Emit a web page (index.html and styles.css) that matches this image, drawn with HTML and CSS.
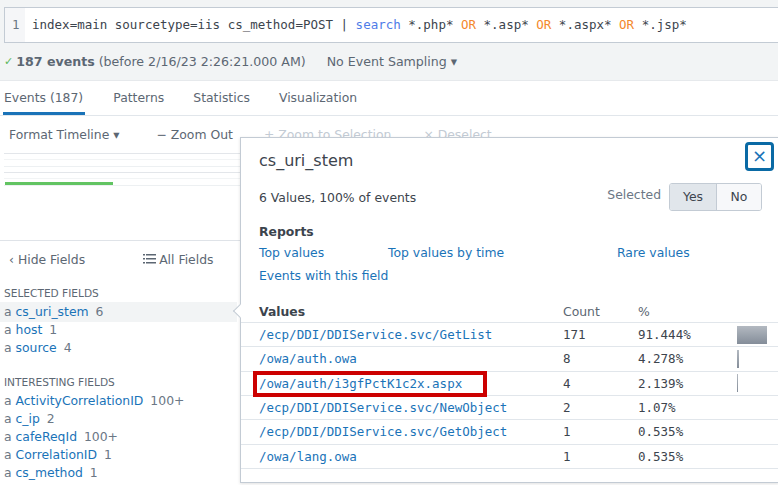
FILE: index.html
```html
<!DOCTYPE html>
<html>
<head>
<meta charset="utf-8">
<link rel="stylesheet" href="styles.css">
</head>
<body>
<div class="top">
  <div class="search">
    <div class="gutter">1</div>
    <div class="query">index=main sourcetype=iis cs_method=POST | <span class="kw">search</span> *.php* <span class="op">OR</span> *.asp* <span class="op">OR</span> *.aspx* <span class="op">OR</span> *.jsp*</div>
  </div>
  <div class="status">
    <span class="check">✓</span><b>187 events</b>&nbsp;(before 2/16/23 2:26:21.000 AM)
    <span class="sampling">No Event Sampling ▾</span>
  </div>
</div>
<div class="tabs">
  <div class="tab active">Events (187)</div>
  <div class="tab">Patterns</div>
  <div class="tab">Statistics</div>
  <div class="tab">Visualization</div>
</div>
<div class="timeline">
  <div class="toolbar">
    <span class="tb fmt">Format Timeline ▾</span>
    <span class="tb zo">− Zoom Out</span>
    <span class="tb dis zs">+ Zoom to Selection</span>
    <span class="tb dis ds">× Deselect</span>
  </div>
  <div class="grid">
    <div class="gl strong"></div>
    <div class="gl faint g2"></div>
    <div class="gl mid g3"></div>
    <div class="gl strong g2"></div>
    <div class="gl faint g2"></div>
    <div class="green"></div>
    <div class="gl mid"></div>
  </div>
</div>
<div class="sidebar">
  <div class="sidehead">
    <span class="hide">‹ Hide Fields</span>
    <span class="all"><svg width="13" height="10" viewBox="0 0 13 10"><g fill="#5c6773"><rect x="0" y="0" width="2" height="1.5"/><rect x="3" y="0" width="10" height="1.5"/><rect x="0" y="4" width="2" height="1.5"/><rect x="3" y="4" width="10" height="1.5"/><rect x="0" y="8" width="2" height="1.5"/><rect x="3" y="8" width="10" height="1.5"/></g></svg> All Fields</span>
  </div>
  <div class="sect">SELECTED FIELDS</div>
  <div class="field sel"><span class="t">a</span> <span class="n">cs_uri_stem</span> <span class="c">6</span></div>
  <div class="field"><span class="t">a</span> <span class="n">host</span> <span class="c">1</span></div>
  <div class="field"><span class="t">a</span> <span class="n">source</span> <span class="c">4</span></div>
  <div class="sect sect2">INTERESTING FIELDS</div>
  <div class="field"><span class="t">a</span> <span class="n">ActivityCorrelationID</span> <span class="c">100+</span></div>
  <div class="field"><span class="t">a</span> <span class="n">c_ip</span> <span class="c">2</span></div>
  <div class="field"><span class="t">a</span> <span class="n">cafeReqId</span> <span class="c">100+</span></div>
  <div class="field"><span class="t">a</span> <span class="n">CorrelationID</span> <span class="c">1</span></div>
  <div class="field"><span class="t">a</span> <span class="n">cs_method</span> <span class="c">1</span></div>
</div>

<div class="popup">
  <div class="close">×</div>
  <div class="ptitle">cs_uri_stem</div>
  <div class="prow">
    <span class="pcount">6 Values, 100% of events</span>
    <span class="selected">Selected</span>
    <div class="btngroup"><span class="btn on">Yes</span><span class="btn">No</span></div>
  </div>
  <div class="reports">Reports</div>
  <div class="links">
    <span class="lk l1">Top values</span>
    <span class="lk l2">Top values by time</span>
    <span class="lk">Rare values</span>
  </div>
  <div class="links"><span class="lk">Events with this field</span></div>
  <table class="vals">
    <thead>
      <tr><th class="cv">Values</th><th class="cc">Count</th><th class="cp">%</th><th class="cb"></th></tr>
    </thead>
    <tbody>
      <tr><td class="cv">/ecp/DDI/DDIService.svc/GetList</td><td class="cc">171</td><td class="cp">91.444%</td><td class="cb"><div class="bar" style="width:30px"></div></td></tr>
      <tr><td class="cv">/owa/auth.owa</td><td class="cc">8</td><td class="cp">4.278%</td><td class="cb"><div class="bar" style="width:2px"></div></td></tr>
      <tr><td class="cv"><span class="hl">/owa/auth/i3gfPctK1c2x.aspx</span></td><td class="cc">4</td><td class="cp">2.139%</td><td class="cb"><div class="bar" style="width:1px"></div></td></tr>
      <tr><td class="cv">/ecp/DDI/DDIService.svc/NewObject</td><td class="cc">2</td><td class="cp">1.07%</td><td class="cb"></td></tr>
      <tr><td class="cv">/ecp/DDI/DDIService.svc/GetObject</td><td class="cc">1</td><td class="cp">0.535%</td><td class="cb"></td></tr>
      <tr><td class="cv">/owa/lang.owa</td><td class="cc">1</td><td class="cp">0.535%</td><td class="cb"></td></tr>
    </tbody>
  </table>
</div>
</body>
</html>
```

FILE: styles.css
```css
html, body {
  margin: 0;
  padding: 0;
}
body {
  width: 778px;
  height: 485px;
  overflow: hidden;
  position: relative;
  background: #fff;
  font-family: "DejaVu Sans", sans-serif;
  font-size: 12.4px;
  color: #3c444d;
}
.top {
  background: #f2f4f5;
  border-bottom: 1px solid #e6e9ec;
  padding-top: 7px;
  box-sizing: border-box;
  height: 81px;
}
.search {
  margin-left: 4px;
  margin-right: -20px;
  height: 36px;
  box-sizing: border-box;
  border: 1px solid #c3cbd4;
  background: #fff;
  display: flex;
  align-items: stretch;
}
.gutter {
  width: 20px;
  background: #f5f6f8;
  color: #6b7785;
  font-family: "DejaVu Sans Mono", monospace;
  font-size: 12.5px;
  line-height: 34px;
  padding-left: 7px;
  box-sizing: border-box;
}
.query {
  padding-left: 7px;
  font-family: "DejaVu Sans Mono", monospace;
  font-size: 12.5px;
  line-height: 34px;
  white-space: pre;
  color: #3c444d;
}
.kw { color: #4f7ce8; }
.op { color: #f4882b; }
.status {
  height: 37px;
  display: flex;
  align-items: center;
  padding-left: 4px;
  color: #5c6773;
  font-size: 12.6px;
}
.check {
  color: #5cb85c;
  font-size: 11px;
  margin-right: 3px;
}
.status b { font-weight: bold; }
.sampling { margin-left: 21px; }
.tabs {
  height: 34px;
  border-bottom: 1px solid #e1e6eb;
  display: flex;
  gap: 27px;
  padding-left: 3px;
}
.tab {
  padding: 9px 1px 0;
  line-height: 16px;
  color: #5c6773;
  font-size: 12.4px;
  box-sizing: border-box;
  height: 34px;
}
.tab.active {
  border-bottom: 3px solid #1a73b8;
  padding-right: 2px;
}
.timeline {
  height: 124px;
  border-bottom: 1px solid #dfe3e8;
}
.toolbar {
  height: 37px;
  line-height: 38px;
  display: flex;
  color: #5c6773;
  position: relative;
}
.tb { white-space: nowrap; }
.fmt { margin-left: 9px; }
.zo { margin-left: 37px; }
.zs { margin-left: 31px; }
.ds { margin-left: 32px; }
.dis { color: #c3cbd4; }
.grid {
  margin-left: 4px;
}
.gl { height: 1px; }
.gl.strong { background: #e3e6ea; }
.gl.mid { background: #edf0f2; }
.gl.faint { background: #f2f4f5; }
.g2 { margin-top: 5px; }
.g3 { margin-top: 6px; }
.green {
  margin-top: 3px;
  width: 108px;
  margin-left: 1px;
  height: 3px;
  background: #62c462;
}
.sidebar {
  width: 237px;
}
.sidehead {
  height: 36px;
  display: flex;
  align-items: center;
  color: #5c6773;
}
.hide { margin-left: 9px; }
.all { margin-left: 58px; display: flex; align-items: center; gap: 3px; }
.sect {
  margin-top: 7px;
  line-height: 19px;
  padding-left: 4px;
  font-size: 10.6px;
  color: #5c6773;
}
.sect2 { margin-top: 15px; line-height: 20px; }
.field {
  line-height: 18px;
  padding-left: 4px;
  white-space: nowrap;
}
.field.sel {
  background: #f2f4f5;
  padding-top: 1px;
  padding-bottom: 1px;
  margin-top: -1px;
  margin-bottom: -1px;
}
.field .t { color: #6b7785; }
.field .n { color: #1a73b8; }
.field .c { color: #6b7785; margin-left: 3px; }
.popup {
  position: absolute;
  left: 240px;
  top: 137px;
  right: -1px;
  height: 346px;
  box-sizing: border-box;
  background: #fff;
  border: 1px solid #c3cbd4;
  box-shadow: 0 1px 3px rgba(0,0,0,0.12);
  padding-left: 18px;
}
.popup::before {
  content: "";
  position: absolute;
  left: -6px;
  top: 168px;
  width: 9px;
  height: 9px;
  background: #fff;
  border-left: 1px solid #c3cbd4;
  border-bottom: 1px solid #c3cbd4;
  transform: rotate(45deg);
}
.close {
  position: absolute;
  top: 4px;
  right: 4px;
  width: 29px;
  height: 29px;
  box-sizing: border-box;
  border: 3px solid #0a6aa5;
  border-radius: 4px;
  color: #1a73b8;
  font-size: 18px;
  line-height: 22px;
  text-align: center;
}
.ptitle {
  margin-top: 13px;
  font-size: 16px;
  line-height: 20px;
  color: #3c444d;
}
.prow {
  margin-top: 12px;
  height: 28px;
  display: flex;
  align-items: center;
}
.pcount { flex: 1; }
.selected {
  color: #6b7785;
  margin-top: -5px;
  margin-right: 8px;
}
.btngroup {
  display: flex;
  margin-right: 16px;
  height: 28px;
  border: 1px solid #c3cbd4;
  border-radius: 3px;
  box-sizing: border-box;
  overflow: hidden;
}
.btn {
  line-height: 26px;
  background: #f7f8fa;
  text-align: center;
  width: 44px;
}
.btn.on {
  background: #e1e6eb;
  border-right: 1px solid #c3cbd4;
  width: 46px;
}
.reports {
  margin-top: 12px;
  font-weight: bold;
  line-height: 18px;
  color: #3c444d;
}
.links {
  height: 23px;
  line-height: 23px;
  display: flex;
  color: #1a73b8;
}
.l1 { width: 129px; }
.l2 { width: 229px; }
.vals {
  margin-top: 13px;
  margin-left: -18px;
  width: calc(100% + 18px);
  border-collapse: collapse;
}
.vals th {
  text-align: left;
  height: 22px;
  padding: 0;
  font-weight: normal;
  color: #5c6773;
  border-bottom: 1px solid #e1e6eb;
}
.vals th.cv { font-weight: bold; color: #3c444d; }
.vals td {
  height: 23.33px;
  padding: 0;
  border-bottom: 1px solid #e1e6eb;
  font-family: "DejaVu Sans Mono", monospace;
  font-size: 12.5px;
  color: #3c444d;
}
.vals .cv { padding-left: 18px; width: 304px; }
.vals td.cv { color: #1a73b8; }
.vals .cc { width: 75px; }
.vals .cp { width: 99px; }
.vals .cb { vertical-align: middle; }
.bar {
  height: 18px;
  background: linear-gradient(#b3b9c1, #848d99);
}
.hl {
  position: relative;
}
.hl::after {
  content: "";
  position: absolute;
  left: -6px;
  top: -5px;
  width: 234px;
  height: 26px;
  box-sizing: border-box;
  border: 4px solid #cc0000;
}
```
